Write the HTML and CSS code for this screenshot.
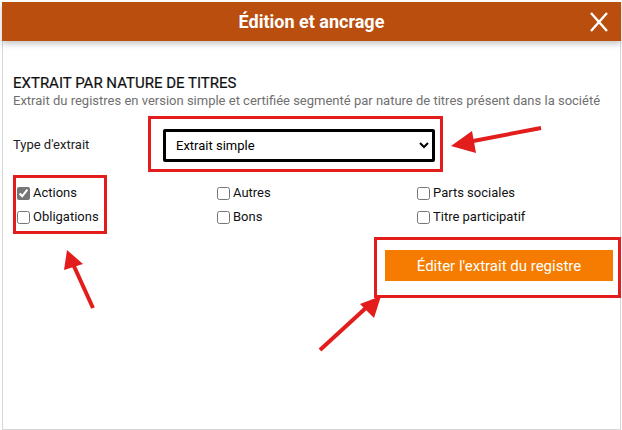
FILE: index.html
```html
<!DOCTYPE html>
<html lang="fr">
<head>
<meta charset="utf-8">
<title>Édition et ancrage</title>
<link rel="stylesheet" href="styles.css">
</head>
<body>
<div class="page">
  <div class="modal">
    <div class="header">
      <span></span>
      <h1 class="title">Édition et ancrage</h1>
      <button class="close" aria-label="Fermer">
        <svg width="20" height="20" viewBox="0 0 20 20"><path d="M2 1 L18 19 M18 1 L2 19" stroke="#fff" stroke-width="2.4" fill="none"/></svg>
      </button>
    </div>
    <div class="content">
      <h2 class="section-title">EXTRAIT PAR NATURE DE TITRES</h2>
      <p class="section-desc">Extrait du registres en version simple et certifiée segmenté par nature de titres présent dans la société</p>

      <div class="type-row">
        <label class="type-label">Type d'extrait</label>
        <div class="mark mark-select">
          <select class="select">
            <option>Extrait simple</option>
          </select>
        </div>
      </div>

      <div class="checks">
        <div class="mark mark-checks col">
          <label class="check"><input type="checkbox" checked>Actions</label>
          <label class="check"><input type="checkbox">Obligations</label>
        </div>
        <div class="col plain">
          <label class="check"><input type="checkbox">Autres</label>
          <label class="check"><input type="checkbox">Bons</label>
        </div>
        <div class="col plain">
          <label class="check"><input type="checkbox">Parts sociales</label>
          <label class="check"><input type="checkbox">Titre participatif</label>
        </div>
      </div>

      <div class="actions">
        <div class="mark mark-button">
          <button class="primary">Éditer l'extrait du registre</button>
        </div>
      </div>
    </div>
  </div>
  <svg class="arrows" width="622" height="430" viewBox="0 0 622 430">
    <g fill="#e31c1c" stroke="#e31c1c">
      <line x1="541" y1="128" x2="468" y2="142" stroke-width="4"/>
      <polygon points="451,146 472,131 476,153" stroke-width="0"/>
      <line x1="93" y1="308" x2="73" y2="264" stroke-width="4"/>
      <polygon points="67,250 83,264 64,270" stroke-width="0"/>
      <line x1="320" y1="350" x2="368" y2="306" stroke-width="4"/>
      <polygon points="381,296 374,318 360,304" stroke-width="0"/>
    </g>
  </svg>
</div>
</body>
</html>
```

FILE: styles.css
```css
* { box-sizing: border-box; }
html, body { margin: 0; padding: 0; background: #fff; }
body { font-family: Roboto, "Liberation Sans", Arial, sans-serif; color: #222; }

.page {
  position: relative;
  width: 622px;
  height: 430px;
  padding: 2px 1px 0 2px;
  background: #fff;
}

.modal {
  width: 619px;
  height: 428px;
  background: #fff;
  border: 1px solid #d6d6d6;
  border-top: 0;
  display: flex;
  flex-direction: column;
}

.header {
  height: 39px;
  background: #b94e0e;
  display: grid;
  grid-template-columns: 44px 1fr 44px;
  align-items: center;
  box-shadow: 0 3px 6px rgba(0,0,0,0.22);
  margin-left: -1px;
  margin-right: -1px;
}
.title {
  margin: 0;
  text-align: center;
  color: #fff;
  font-family: "Liberation Sans Narrow", Roboto, sans-serif;
  font-weight: bold;
  font-size: 18px;
}
.close {
  background: none;
  border: 0;
  padding: 0;
  width: 20px;
  height: 20px;
  margin-left: 12px;
  display: flex;
}

.content {
  padding: 34px 0 0 10px;
}

.section-title {
  margin: 0;
  font-family: "Liberation Sans Narrow", Roboto, sans-serif;
  font-weight: normal;
  font-size: 15px;
  line-height: 17px;
  color: #111;
  -webkit-text-stroke: 0.2px #111;
}
.section-desc {
  margin: 1px 0 0;
  font-size: 13px;
  line-height: 16px;
  color: #707070;
}

.type-row {
  display: flex;
  align-items: center;
  margin-top: 7px;
}
.type-label {
  width: 135px;
  font-size: 13px;
  color: #222;
}
.mark { border: 3px solid #e31c1c; }
.mark-select {
  padding: 10px 5px 7px 12px;
}
.select {
  width: 272px;
  height: 33px;
  border: 3px solid #000;
  border-radius: 2px;
  padding: 0 4px 0 6px;
  font-family: Roboto, "Liberation Sans", sans-serif;
  font-size: 13px;
  color: #000;
  background: #fff;
}

.checks {
  display: grid;
  grid-template-columns: 200px 200px 200px;
  margin-top: 3px;
  align-items: start;
}
.col { display: flex; flex-direction: column; gap: 6px; }
.mark-checks {
  justify-self: start;
  padding: 6px 5px 5px 1px;
}
.plain { padding: 9px 0 0 4px; }
.check {
  display: flex;
  align-items: center;
  font-size: 13px;
  line-height: 18px;
  color: #111;
}
.check input {
  width: 13px;
  height: 13px;
  margin: 0 3px 0 0;
  accent-color: #767676;
}

.actions {
  display: flex;
  justify-content: flex-end;
  margin-top: 3px;
}
.mark-button {
  padding: 10px 5px 14px 8px;
  margin-right: -1px;
}
.primary {
  display: block;
  width: 228px;
  height: 31px;
  border: 0;
  background: #f57c00;
  color: #fff;
  font-family: "Liberation Sans Narrow", Roboto, sans-serif;
  font-size: 15px;
}

.arrows {
  position: absolute;
  left: 0;
  top: 0;
  pointer-events: none;
}
```
